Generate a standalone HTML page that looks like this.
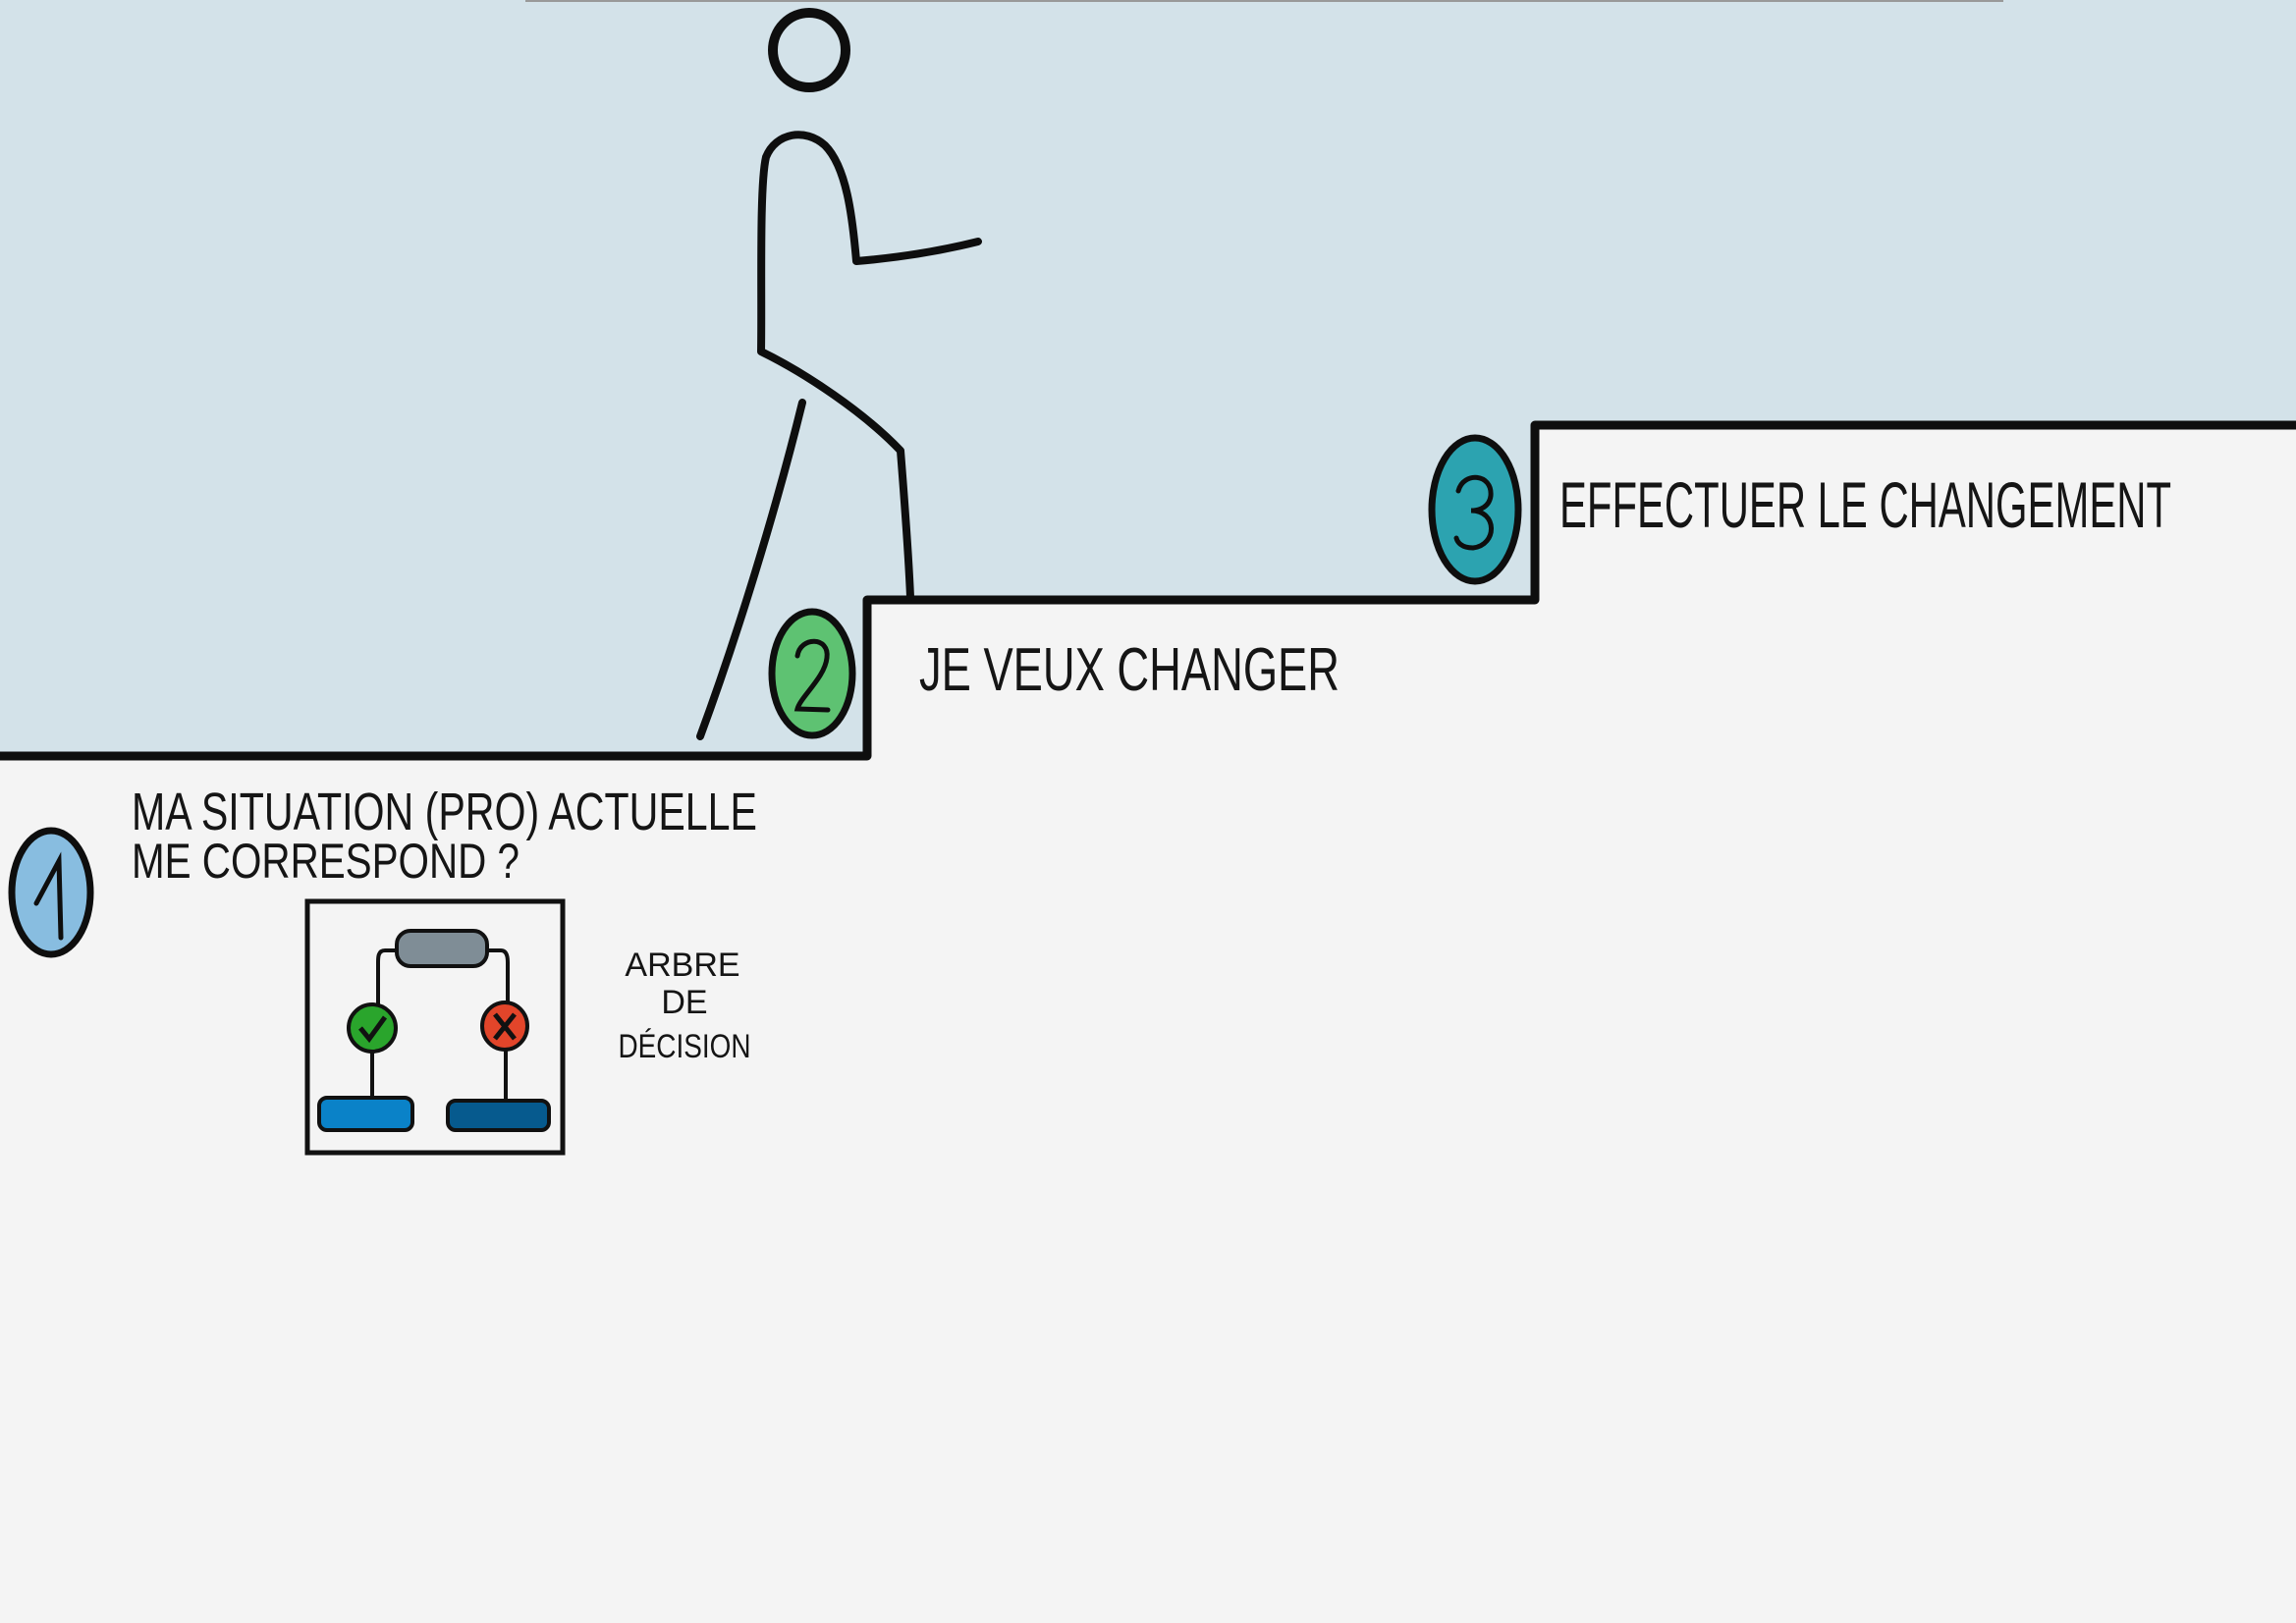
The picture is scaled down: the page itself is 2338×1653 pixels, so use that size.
<!DOCTYPE html>
<html><head><meta charset="utf-8"><style>
html,body{margin:0;padding:0;background:#f4f4f4;}
svg{display:block}
text{font-family:"Liberation Sans",sans-serif;fill:#151515;}
</style></head><body>
<svg width="2338" height="1653" viewBox="0 0 2338 1653" xmlns="http://www.w3.org/2000/svg">
<rect width="2338" height="1653" fill="#f4f4f4"/>
<path d="M0 0 H2338 V433 H1563 V611 H883 V769 H0 Z" fill="#d3e2e9"/>
<line x1="535" y1="1" x2="2040" y2="1" stroke="#999" stroke-width="2"/>
<g fill="none" stroke="#0e0e0e" stroke-linecap="round" stroke-linejoin="round">
<path d="M0 770 H883 V611 H1563 V433 H2338" stroke-width="9"/>
<ellipse cx="824" cy="51" rx="37" ry="38" stroke-width="10"/>
<path d="M996 246 C960 255 920 262 872 266 C868 220 862 170 840 148 C820 130 790 135 780 160 C773 190 776 300 775 358 C820 380 880 420 917 459 C921 510 925 560 927 608" stroke-width="8"/>
<path d="M817 410 C790 520 750 650 713 750" stroke-width="8"/>
</g>
<g stroke="#0e0e0e" stroke-width="7">
<ellipse cx="52" cy="909" rx="40" ry="63" fill="#88bde0"/>
<ellipse cx="827" cy="686" rx="41" ry="63" fill="#5ec272"/>
<ellipse cx="1502" cy="519" rx="44" ry="73" fill="#2ca3b0"/>
</g>
<g fill="none" stroke="#0e0e0e" stroke-width="5" stroke-linecap="round">
<path d="M37 920 L60 877 L62 955"/>
<path d="M812 668 C815 648 845 648 842 670 C840 690 815 710 812 722 L843 723"/>
<path d="M1485 500 C1490 480 1520 482 1518 505 C1516 520 1500 520 1498 520 C1525 520 1525 555 1500 558 C1488 558 1484 552 1483 548"/>
</g>
<text x="936" y="703" font-size="62" textLength="428" lengthAdjust="spacingAndGlyphs">JE VEUX CHANGER</text>
<text x="1588" y="537" font-size="66" textLength="623" lengthAdjust="spacingAndGlyphs">EFFECTUER LE CHANGEMENT</text>
<text x="134" y="845" font-size="54" textLength="637" lengthAdjust="spacingAndGlyphs">MA SITUATION (PRO) ACTUELLE</text>
<text x="134" y="894" font-size="50" textLength="395" lengthAdjust="spacingAndGlyphs">ME CORRESPOND ?</text>
<g font-size="34" text-anchor="middle">
<text x="695" y="994">ARBRE</text>
<text x="697" y="1032">DE</text>
<text x="697" y="1077" textLength="135" lengthAdjust="spacingAndGlyphs">DÉCISION</text>
</g>
<rect x="313" y="918" width="260" height="256" fill="none" stroke="#111" stroke-width="5"/>
<g stroke="#111" stroke-width="4" fill="none">
<path d="M405 968 H392 C385 968 385 975 385 980 V1024"/>
<path d="M494 968 H510 C516 968 517 975 517 980 V1022"/>
<path d="M379 1071 V1118"/>
<path d="M515 1068 V1121"/>
</g>
<g stroke="#111" stroke-width="4">
<rect x="404" y="948" width="92" height="36" rx="14" fill="#7f8d96"/>
<ellipse cx="379" cy="1047" rx="24" ry="24" fill="#2aa52c"/>
<ellipse cx="514" cy="1045" rx="23" ry="24" fill="#e2452a"/>
<rect x="325" y="1118" width="95" height="33" rx="8" fill="#0a82c8"/>
<rect x="456" y="1121" width="103" height="30" rx="8" fill="#065a8e"/>
</g>
<path d="M367 1047 L376 1058 L392 1036" stroke="#111" stroke-width="5" fill="none"/>
<path d="M504 1033 L524 1058 M524 1033 L504 1058" stroke="#111" stroke-width="5" fill="none"/>
</svg>
</body></html>
